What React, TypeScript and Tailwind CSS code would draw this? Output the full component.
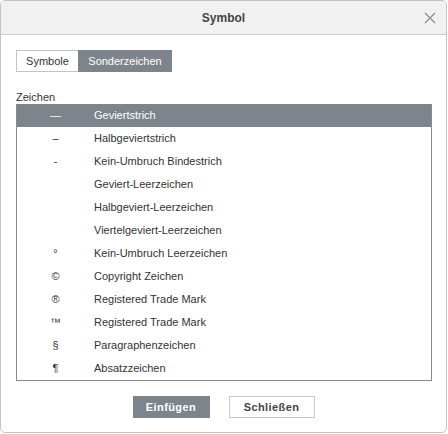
import React from "react";

const rows = [
  { sym: "—", name: "Geviertstrich" },
  { sym: "–", name: "Halbgeviertstrich" },
  { sym: "-", name: "Kein-Umbruch Bindestrich" },
  { sym: "", name: "Geviert-Leerzeichen" },
  { sym: "", name: "Halbgeviert-Leerzeichen" },
  { sym: "", name: "Viertelgeviert-Leerzeichen" },
  { sym: "°", name: "Kein-Umbruch Leerzeichen" },
  { sym: "©", name: "Copyright Zeichen" },
  { sym: "®", name: "Registered Trade Mark" },
  { sym: "™", name: "Registered Trade Mark" },
  { sym: "§", name: "Paragraphenzeichen" },
  { sym: "¶", name: "Absatzzeichen" },
];

export default function App() {
  return (
    <div className="w-[448px] h-[434px] bg-white font-['Liberation_Sans',Arial,sans-serif] text-[#333]">
      <div className="w-[447px] h-[433px] border border-[#c4c4c4] rounded-[5px] overflow-hidden flex flex-col">
        {/* Header */}
        <div className="relative h-[34px] shrink-0 bg-[#f1f1f1] border-b border-[#cbcbcb] flex items-center justify-center">
          <span className="text-[12px] font-bold text-[#444]">Symbol</span>
          <button className="absolute right-[10px] top-[11px] w-[12px] h-[12px]">
            <svg width="12" height="12" viewBox="0 0 12 12">
              <path d="M1 1L11 11M11 1L1 11" stroke="#8c8c8c" strokeWidth="1.2" />
            </svg>
          </button>
        </div>

        <div className="px-[15px] flex flex-col">
          {/* Tabs */}
          <div className="mt-[15px] flex h-[22px] text-[11px]">
            <div className="w-[62px] flex items-center justify-center border border-r-0 border-[#c4c4c4] text-[#333]">
              Symbole
            </div>
            <div className="w-[94px] flex items-center justify-center bg-[#7d848b] text-white">
              Sonderzeichen
            </div>
          </div>

          <div className="mt-[18px] h-[14px] text-[11px] leading-[14px] text-[#333]">Zeichen</div>

          {/* List */}
          <div className="w-[416px] h-[277px] border border-t-0 border-[#8a8a8a] flex flex-col">
            {rows.map((r, i) => (
              <div
                key={i}
                className={
                  i === 0
                    ? "h-[23px] shrink-0 flex items-center text-[11px] bg-[#7d848b] text-white"
                    : "h-[23px] shrink-0 flex items-center text-[11px] text-[#333]"
                }
              >
                <div className="w-[77px] text-center">{r.sym}</div>
                <div>{r.name}</div>
              </div>
            ))}
          </div>
        </div>

        {/* Footer buttons */}
        <div className="mt-[15px] flex justify-center gap-[19px]">
          <button className="w-[77px] h-[22px] bg-[#7d848b] text-white text-[11px] font-bold tracking-[0.4px]">
            Einfügen
          </button>
          <button className="w-[86px] h-[22px] border border-[#c8c8c8] bg-white text-[#444] text-[11px] font-bold tracking-[0.4px]">
            Schließen
          </button>
        </div>
      </div>
    </div>
  );
}
